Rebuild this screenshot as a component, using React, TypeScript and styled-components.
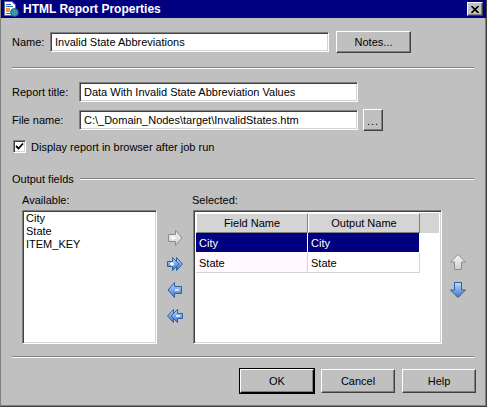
import React from 'react'
import styled, { createGlobalStyle, css } from 'styled-components'

const GlobalStyle = createGlobalStyle`
  html, body {
    margin: 0;
    padding: 0;
    background: #c0c0c0;
  }
  body {
    font-family: 'Liberation Sans', Arial, sans-serif;
    font-size: 11px;
    color: #000;
  }
`

const dialogGray = '#c0c0c0'

const raised = css`
  border-top: 1px solid #fff;
  border-left: 1px solid #fff;
  border-right: 1px solid #404040;
  border-bottom: 1px solid #404040;
  box-shadow: inset -1px -1px 0 #808080;
`

const sunken = css`
  border-top: 1px solid #808080;
  border-left: 1px solid #808080;
  border-right: 1px solid #fff;
  border-bottom: 1px solid #fff;
  box-shadow: inset 1px 1px 0 #404040, inset -1px -1px 0 #d4d4d4;
`

const Window = styled.div`
  box-sizing: border-box;
  width: 487px;
  height: 407px;
  background: ${dialogGray};
  border-left: 1px solid #808080;
  border-right: 1px solid #404040;
  border-bottom: 1px solid #404040;
  box-shadow: inset -1px -1px 0 #808080;
  display: flex;
  flex-direction: column;
  overflow: hidden;
`

const TitleBar = styled.div`
  height: 18px;
  background: #000080;
  display: flex;
  align-items: center;
  padding: 0 3px 0 2px;
  gap: 4px;
`

const TitleText = styled.span`
  flex: 1;
  color: #fff;
  font-weight: bold;
  font-size: 12px;
`

const CloseButton = styled.div`
  box-sizing: border-box;
  width: 16px;
  height: 14px;
  background: ${dialogGray};
  ${raised};
  display: flex;
  align-items: center;
  justify-content: center;
`

const Body = styled.div`
  padding: 13px 10px 0 11px;
  display: flex;
  flex-direction: column;
`

const Row = styled.div<{ $top: number; $h: number }>`
  display: flex;
  align-items: center;
  margin-top: ${p => p.$top}px;
  height: ${p => p.$h}px;
`

const Label = styled.span<{ $w: number }>`
  width: ${p => p.$w}px;
  flex-shrink: 0;
  white-space: nowrap;
`

const TextBox = styled.div<{ $w: number }>`
  box-sizing: border-box;
  width: ${p => p.$w}px;
  height: 20px;
  background: #fff;
  ${sunken};
  padding: 0 4px;
  display: flex;
  align-items: center;
  white-space: nowrap;
  overflow: hidden;
`

const Button = styled.button<{ $w: number; $h: number; $default?: boolean }>`
  box-sizing: border-box;
  width: ${p => p.$w}px;
  height: ${p => p.$h}px;
  margin-left: ${p => (p.$default ? 0 : 7)}px;
  padding: 0;
  background: ${dialogGray};
  font-family: inherit;
  font-size: 11px;
  color: #000;
  ${raised};
  ${p =>
    p.$default &&
    css`
      outline: 1px solid #000;
      outline-offset: 0;
      border-right-color: #000;
      border-bottom-color: #000;
    `}
`

const SmallButton = styled(Button)`
  margin-left: 5px;
  letter-spacing: 1px;
  padding-top: 2px;
`

const Separator = styled.div<{ $top: number }>`
  margin-top: ${p => p.$top}px;
  margin-right: 2px;
  border-top: 1px solid #808080;
  border-bottom: 1px solid #fff;
`

const CheckBox = styled.span`
  box-sizing: border-box;
  width: 13px;
  height: 13px;
  background: #fff;
  ${sunken};
  margin: 0 5px 0 1px;
  display: flex;
  align-items: center;
  justify-content: center;
`

const GroupHeading = styled.div`
  display: flex;
  align-items: center;
  margin-top: 19px;
  height: 13px;
  gap: 6px;
  margin-right: 2px;

  &::after {
    content: '';
    flex: 1;
    border-top: 1px solid #808080;
    border-bottom: 1px solid #fff;
  }
`

const FieldsArea = styled.div`
  display: flex;
  padding-left: 10px;
  margin-top: 9px;
`

const Column = styled.div`
  display: flex;
  flex-direction: column;
`

const ColumnLabel = styled.div<{ $indent?: number }>`
  height: 13px;
  line-height: 13px;
  margin-bottom: 3px;
  margin-left: ${p => p.$indent ?? 0}px;
`

const ListBox = styled.div`
  box-sizing: border-box;
  width: 135px;
  height: 134px;
  background: #fff;
  ${sunken};
  padding: 1px 3px;
`

const ListItem = styled.div`
  height: 13px;
  line-height: 13px;
`

const ArrowColumn = styled.div<{ $w: number; $top: number; $gap: number }>`
  width: ${p => p.$w}px;
  display: flex;
  flex-direction: column;
  align-items: center;
  padding-top: ${p => p.$top}px;
  gap: ${p => p.$gap}px;
`

const ArrowSlot = styled.div`
  width: 16px;
  height: 16px;
  display: flex;
`

const Grid = styled.div`
  box-sizing: border-box;
  width: 249px;
  height: 134px;
  background: #fff;
  ${sunken};
  padding: 2px;
`

const GridHeader = styled.div`
  display: flex;
  height: 20px;
  background: #d4d4d4;
`

const HeaderCell = styled.div`
  box-sizing: border-box;
  width: 112px;
  height: 20px;
  border-top: 1px solid #fff;
  border-left: 1px solid #fff;
  border-right: 1px solid #808080;
  border-bottom: 1px solid #808080;
  display: flex;
  align-items: center;
  justify-content: center;
`

const GridRow = styled.div<{ $selected?: boolean }>`
  display: flex;
  height: 20px;
  color: ${p => (p.$selected ? '#fff' : '#000')};
`

const Cell = styled.div<{ $selected?: boolean; $tint?: string }>`
  box-sizing: border-box;
  width: 112px;
  height: 20px;
  padding-left: 3px;
  display: flex;
  align-items: center;
  background: ${p => (p.$selected ? '#000080' : p.$tint ?? '#fff')};
  border-right: 1px solid ${p => (p.$selected ? '#fff' : '#d4d4d4')};
  border-bottom: 1px solid ${p => (p.$selected ? '#fff' : '#d4d4d4')};
`

const Footer = styled.div`
  display: flex;
  justify-content: flex-end;
  margin-top: 11px;
`

const blue = { fill: 'url(#blueFill)', stroke: '#2f5f9f' }
const grey = { fill: 'url(#greyFill)', stroke: '#8c8c8c' }

function Defs() {
  return (
    <svg width="0" height="0" style={{ position: 'absolute' }}>
      <defs>
        <linearGradient id="blueFill" x1="0" y1="0" x2="0" y2="1">
          <stop offset="0" stopColor="#c4dcf8" />
          <stop offset="0.5" stopColor="#7aa8e4" />
          <stop offset="1" stopColor="#3e74c0" />
        </linearGradient>
        <linearGradient id="greyFill" x1="0" y1="0" x2="0" y2="1">
          <stop offset="0" stopColor="#f4f4f4" />
          <stop offset="1" stopColor="#cfcfcf" />
        </linearGradient>
      </defs>
    </svg>
  )
}

type Look = typeof blue

const AddArrow = ({ look, double }: { look: Look; double?: boolean }) => (
  <svg width="16" height="16" viewBox="0 0 16 16">
    {double && <path d="M9.5 1.5 L15.5 8 L9.5 14.5 Z" fill={look.fill} stroke={look.stroke} strokeLinejoin="round" />}
    <path
      d={double ? 'M0.5 5.5 H5.5 V1.5 L12 8 L5.5 14.5 V10.5 H0.5 Z' : 'M1.5 4.5 H8.5 V0.5 L15 8 L8.5 15.5 V11.5 H1.5 Z'}
      fill={look.fill}
      stroke={look.stroke}
      strokeLinejoin="round"
    />
    <path d={double ? 'M5 6 V10 M3 8 H7' : 'M6 5.5 V10.5 M3.5 8 H8.5'} stroke="#fff" strokeWidth="1.4" />
  </svg>
)

const RemoveArrow = ({ look, double }: { look: Look; double?: boolean }) => (
  <svg width="16" height="16" viewBox="0 0 16 16">
    {double && <path d="M6.5 1.5 L0.5 8 L6.5 14.5 Z" fill={look.fill} stroke={look.stroke} strokeLinejoin="round" />}
    <path
      d={double ? 'M15.5 5.5 H10.5 V1.5 L4 8 L10.5 14.5 V10.5 H15.5 Z' : 'M14.5 4.5 H7.5 V0.5 L1 8 L7.5 15.5 V11.5 H14.5 Z'}
      fill={look.fill}
      stroke={look.stroke}
      strokeLinejoin="round"
    />
    <path d={double ? 'M9 8 H13' : 'M8 8 H12'} stroke="#fff" strokeWidth="1.4" />
  </svg>
)

const UpArrow = () => (
  <svg width="16" height="16" viewBox="0 0 16 16">
    <path d="M8 0.5 L15.5 8 H11.5 V15.5 H4.5 V8 H0.5 Z" fill={grey.fill} stroke={grey.stroke} strokeLinejoin="round" />
  </svg>
)

const DownArrow = () => (
  <svg width="16" height="16" viewBox="0 0 16 16">
    <path d="M4.5 0.5 H11.5 V8 H15.5 L8 15.5 L0.5 8 H4.5 Z" fill={blue.fill} stroke={blue.stroke} strokeLinejoin="round" />
  </svg>
)

const ReportIcon = () => (
  <svg width="16" height="16" viewBox="0 0 16 16">
    <path d="M1.5 0.5 H9 L12.5 4 V14.5 H1.5 Z" fill="#fff" stroke="#5a6a8a" />
    <rect x="3" y="3" width="5" height="1" fill="#3060c0" />
    <rect x="3" y="5" width="7" height="1" fill="#3060c0" />
    <rect x="3" y="7" width="4" height="4" fill="#e8a030" />
    <rect x="3" y="12" width="4" height="1" fill="#3060c0" />
    <circle cx="11.5" cy="11.5" r="4" fill="#2a8ad8" stroke="#1a4a90" strokeWidth="0.8" />
    <path d="M9.5 10 Q11 9 12 10.5 T14 12 M10 13.5 Q11.5 12.5 12.5 14" stroke="#3cb44a" strokeWidth="1.4" fill="none" />
  </svg>
)

const CloseGlyph = () => (
  <svg width="8" height="7" viewBox="0 0 8 7">
    <path d="M0.5 0 L7.5 7 M7.5 0 L0.5 7" stroke="#000" strokeWidth="1.6" />
  </svg>
)

const CheckMark = () => (
  <svg width="9" height="9" viewBox="0 0 9 9">
    <path d="M1 4 L3.5 6.5 L8 1.5" stroke="#000" strokeWidth="1.8" fill="none" />
  </svg>
)

const selectedFields = [
  { field: 'City', output: 'City' },
  { field: 'State', output: 'State' },
]

export default function App() {
  return (
    <>
      <GlobalStyle />
      <Defs />
      <Window>
        <TitleBar>
          <ReportIcon />
          <TitleText>HTML Report Properties</TitleText>
          <CloseButton>
            <CloseGlyph />
          </CloseButton>
        </TitleBar>

        <Body>
          <Row $top={0} $h={22}>
            <Label $w={38}>Name:</Label>
            <TextBox $w={279}>Invalid State Abbreviations</TextBox>
            <Button $w={75} $h={22}>Notes...</Button>
          </Row>

          <Separator $top={14} />

          <Row $top={13} $h={20}>
            <Label $w={67}>Report title:</Label>
            <TextBox $w={279}>Data With Invalid State Abbreviation Values</TextBox>
          </Row>

          <Row $top={7} $h={22}>
            <Label $w={67}>File name:</Label>
            <TextBox $w={279}>C:\_Domain_Nodes\target\InvalidStates.htm</TextBox>
            <SmallButton $w={20} $h={22}>...</SmallButton>
          </Row>

          <Row $top={9} $h={13}>
            <CheckBox>
              <CheckMark />
            </CheckBox>
            <span>Display report in browser after job run</span>
          </Row>

          <GroupHeading>Output fields</GroupHeading>

          <FieldsArea>
            <Column>
              <ColumnLabel>Available:</ColumnLabel>
              <ListBox>
                <ListItem>City</ListItem>
                <ListItem>State</ListItem>
                <ListItem>ITEM_KEY</ListItem>
              </ListBox>
            </Column>

            <ArrowColumn $w={36} $top={36} $gap={10}>
              <ArrowSlot><AddArrow look={grey} /></ArrowSlot>
              <ArrowSlot><AddArrow look={blue} double /></ArrowSlot>
              <ArrowSlot><RemoveArrow look={blue} /></ArrowSlot>
              <ArrowSlot><RemoveArrow look={blue} double /></ArrowSlot>
            </ArrowColumn>

            <Column>
              <ColumnLabel $indent={-1}>Selected:</ColumnLabel>
              <Grid>
                <GridHeader>
                  <HeaderCell>Field Name</HeaderCell>
                  <HeaderCell>Output Name</HeaderCell>
                </GridHeader>
                {selectedFields.map((r, i) => (
                  <GridRow key={r.field} $selected={i === 0}>
                    <Cell $selected={i === 0} $tint="#fff8fe">{r.field}</Cell>
                    <Cell $selected={i === 0}>{r.output}</Cell>
                  </GridRow>
                ))}
              </Grid>
            </Column>

            <ArrowColumn $w={32} $top={60} $gap={12}>
              <ArrowSlot><UpArrow /></ArrowSlot>
              <ArrowSlot><DownArrow /></ArrowSlot>
            </ArrowColumn>
          </FieldsArea>

          <Separator $top={12} />

          <Footer>
            <Button $w={74} $h={24} $default>OK</Button>
            <Button $w={74} $h={24}>Cancel</Button>
            <Button $w={74} $h={24}>Help</Button>
          </Footer>
        </Body>
      </Window>
    </>
  )
}
